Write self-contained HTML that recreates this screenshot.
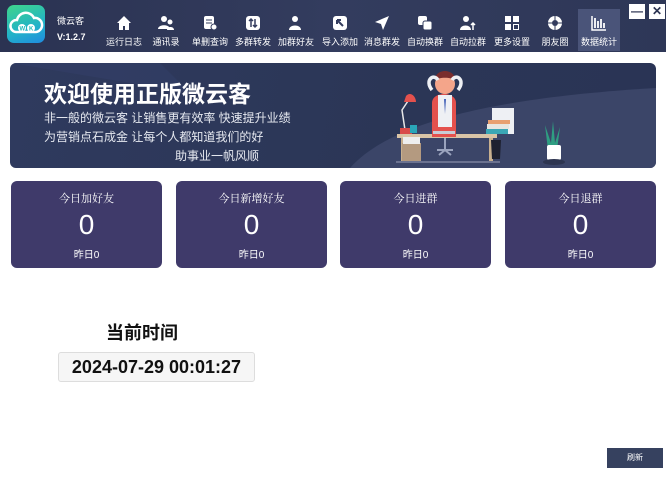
<!DOCTYPE html>
<html><head><meta charset="utf-8"><style>
*{margin:0;padding:0;box-sizing:border-box}
body{width:666px;height:484px;background:#fff;font-family:"Liberation Sans","Noto Sans CJK SC",sans-serif;position:relative;overflow:hidden}
.hdr{position:absolute;left:0;top:0;width:666px;height:52px;background:linear-gradient(90deg,#2b3352,#333c5e 50%,#2e3757)}
.logo{position:absolute;left:7px;top:5px;width:38px;height:38px;border-radius:7px;background:linear-gradient(160deg,#3fd58a,#22b3c8 60%,#1f8be0)}
.app{position:absolute;left:57px;color:#fff;font-size:9px}
.nav{position:absolute;top:15px;width:44px;text-align:center;color:#fff;font-size:9px}
.nav svg{display:block;margin:0 auto 4px}
.act{position:absolute;left:578px;top:9px;width:42px;height:42px;background:#4a5479}
.wb{position:absolute;top:4px;width:16px;height:15px;background:#fff;color:#2b3352;font-weight:bold;text-align:center;font-size:12px;line-height:15px}
.ban{position:absolute;left:10px;top:63px;width:646px;height:105px;border-radius:6px;background:linear-gradient(100deg,#2f3a5e,#2b3656 60%,#2a3455);overflow:hidden}
.card{position:absolute;top:181px;width:151px;height:87px;border-radius:6px;background:#3f3a6a;color:#fff;text-align:center}
.card .t{font-size:11px;margin-top:9px;font-family:"Noto Serif CJK SC",serif}
.card .n{font-size:28px;margin-top:3px;line-height:32px}
.card .y{font-size:10px;margin-top:5px}
</style></head><body>
<div class="hdr"></div>
<div class="logo"><svg width="38" height="38"><path d="M9 27a6 6 0 0 1 1-12a9 9 0 0 1 17-2a7 7 0 0 1 2 14z" fill="none" stroke="#fff" stroke-width="2.5"/><circle cx="15" cy="23" r="4" fill="#fff"/><circle cx="24" cy="23" r="4" fill="#fff"/><text x="12.5" y="25.5" font-size="6" fill="#2bb" font-weight="bold">W</text><text x="22" y="25.5" font-size="6" fill="#2bb" font-weight="bold">K</text></svg></div>
<div class="app" style="top:14px">微云客</div>
<div class="app" style="top:32px;font-weight:bold">V:1.2.7</div>
<div class="act"></div>
<div class="nav" style="left:102px"><svg width="16" height="16"><path d="M8 1L1 8h2v7h4v-4h2v4h4V8h2z" fill="#fff"/></svg>运行日志</div>
<div class="nav" style="left:144px"><svg width="16" height="16"><circle cx="6" cy="4" r="3" fill="#fff"/><path d="M0 14c0-5 12-5 12 0z" fill="#fff"/><circle cx="12" cy="7" r="2.5" fill="#fff"/><path d="M9 15c0-4 7-4 7 0z" fill="#fff"/></svg>通讯录</div>
<div class="nav" style="left:188px"><svg width="16" height="16"><rect x="2" y="1" width="10" height="13" rx="2" fill="#fff"/><path d="M4 5h6M4 8h6" stroke="#333c5e"/><circle cx="12" cy="12" r="3" fill="#fff" stroke="#333c5e"/></svg>单删查询</div>
<div class="nav" style="left:231px"><svg width="16" height="16"><rect x="1" y="1" width="14" height="14" rx="3" fill="#fff"/><path d="M6 4v8M4 6l2-2 2 2M10 12V4M8 10l2 2 2-2" stroke="#333c5e" stroke-width="1.5" fill="none"/></svg>多群转发</div>
<div class="nav" style="left:274px"><svg width="16" height="16"><circle cx="7" cy="4" r="3" fill="#fff"/><path d="M1 15c0-6 12-6 12 0z" fill="#fff"/></svg>加群好友</div>
<div class="nav" style="left:318px"><svg width="16" height="16"><rect x="1" y="1" width="14" height="14" rx="3" fill="#fff"/><path d="M5 5l6 6M5 5v4M5 5h4" stroke="#333c5e" stroke-width="2" fill="none"/></svg>导入添加</div>
<div class="nav" style="left:360px"><svg width="16" height="16"><path d="M15 1L1 7l6 2 2 6z" fill="#fff"/></svg>消息群发</div>
<div class="nav" style="left:403px"><svg width="16" height="16"><rect x="1" y="1" width="9" height="9" rx="2" fill="#fff"/><rect x="6" y="6" width="9" height="9" rx="2" fill="#fff" stroke="#333c5e"/></svg>自动换群</div>
<div class="nav" style="left:446px"><svg width="16" height="16"><circle cx="6" cy="4" r="3" fill="#fff"/><path d="M0 15c0-6 11-6 11 0z" fill="#fff"/><path d="M13 15V8M11 10l2-2 2 2" stroke="#fff" stroke-width="1.5" fill="none"/></svg>自动拉群</div>
<div class="nav" style="left:490px"><svg width="16" height="16"><rect x="1" y="1" width="6" height="6" fill="#fff"/><rect x="9" y="1" width="6" height="6" fill="#fff"/><rect x="1" y="9" width="6" height="6" fill="#fff"/><rect x="9.5" y="9.5" width="5" height="5" fill="none" stroke="#fff"/></svg>更多设置</div>
<div class="nav" style="left:533px"><svg width="16" height="16"><circle cx="8" cy="8" r="7" fill="#fff"/><circle cx="8" cy="8" r="3" fill="#333c5e"/><path d="M8 1v4M15 8h-4M8 15v-4M1 8h4" stroke="#333c5e"/></svg>朋友圈</div>
<div class="nav" style="left:577px"><svg width="16" height="16"><path d="M1 1v14h14" stroke="#fff" stroke-width="1.5" fill="none"/><path d="M4 3v10M7 6v7M10 4v9M13 8v5" stroke="#fff" stroke-width="1.8"/></svg>数据统计</div>
<div class="wb" style="left:629px">—</div>
<div class="wb" style="left:649px">✕</div>

<div class="ban">
<svg width="646" height="105" style="position:absolute;left:0;top:0">
<path d="M340 105C380 60 480 35 646 25V105z" fill="#3b4568"/>
<path d="M0 0L180 30 150 0z" fill="#34406a" opacity=".5"/>
<g transform="translate(-10,-63)">
<rect x="397" y="134" width="100" height="4" fill="#d9c4a6"/>
<rect x="401" y="138" width="4" height="24" fill="#c8b08f"/><rect x="489" y="138" width="4" height="24" fill="#c8b08f"/>
<rect x="402" y="143" width="19" height="19" fill="#b49a80"/><rect x="403" y="137" width="17" height="7" fill="#eee"/>
<rect x="396" y="161" width="104" height="2" fill="#6b7290"/>
<path d="M432 103c0-12 24-12 24 0v34h-24z" fill="#e4514d"/>
<path d="M438 95h14v32h-14z" fill="#eef0f4"/>
<path d="M444 99l1 15 1-15z" fill="#4563b8"/>
<circle cx="445" cy="84" r="10" fill="#f4a58a"/>
<path d="M435 80c0-12 20-12 20 0c-4-3-16-3-20 0z" fill="#7a2d2d"/>
<path d="M432 90c-8-10 2-17 6-10M458 90c8-10-2-17-6-10" stroke="#eef0f4" stroke-width="3.5" fill="none"/>
<rect x="433" y="131" width="22" height="3" fill="#c9ccd6"/>
<path d="M437 150h16M445 138v12M439 155l6-5 6 5" stroke="#9aa3bd" stroke-width="2" fill="none"/>
<path d="M405 130l-3-20 8-12" stroke="#e8e8e8" stroke-width="1.5" fill="none"/>
<path d="M406 96c4-5 10 0 10 6h-12z" fill="#e4514d"/>
<rect x="400" y="128" width="12" height="6" fill="#d94b4a"/>
<rect x="410" y="125" width="7" height="8" fill="#2aa6b8"/>
<rect x="492" y="108" width="22" height="26" fill="#eef0f4"/>
<rect x="488" y="120" width="22" height="4" fill="#e8a070"/><rect x="487" y="124" width="22" height="5" fill="#e8e6e0"/><rect x="486" y="129" width="22" height="5" fill="#3ba7b5"/>
<path d="M491 140h10l-1 19h-8z" fill="#1d2030"/>
<path d="M548 150l-3-25 6 18 2-22 2 22 5-16-3 23z" fill="#2f9e82"/>
<rect x="547" y="145" width="14" height="15" rx="2" fill="#fff"/>
<ellipse cx="554" cy="162" rx="11" ry="3" fill="#2d3550"/>
</g>
</svg>
<div style="position:absolute;left:34px;top:12px;font-size:23px;font-weight:bold;color:#fff">欢迎使用正版微云客</div>
<div style="position:absolute;left:34px;top:46px;font-size:12px;color:#e6e9f0;line-height:19px">非一般的微云客 让销售更有效率 快速提升业绩<br>为营销点石成金 让每个人都知道我们的好<br><span style="padding-left:131px">助事业一帆风顺</span></div>
</div>

<div class="card" style="left:11px"><div class="t">今日加好友</div><div class="n">0</div><div class="y">昨日0</div></div>
<div class="card" style="left:176px"><div class="t">今日新增好友</div><div class="n">0</div><div class="y">昨日0</div></div>
<div class="card" style="left:340px"><div class="t">今日进群</div><div class="n">0</div><div class="y">昨日0</div></div>
<div class="card" style="left:505px"><div class="t">今日退群</div><div class="n">0</div><div class="y">昨日0</div></div>

<div style="position:absolute;left:106px;top:319px;font-size:18px;color:#111;font-weight:bold">当前时间</div>
<div style="position:absolute;left:58px;top:352px;width:197px;height:30px;border:1px solid #ddd;border-radius:3px;background:#f6f6f6;font-size:18px;font-weight:bold;color:#111;text-align:center;line-height:28px">2024-07-29 00:01:27</div>
<div style="position:absolute;left:607px;top:448px;width:56px;height:20px;background:#36415f;color:#fff;font-size:8px;text-align:center;line-height:20px">刷新</div>
</body></html>
